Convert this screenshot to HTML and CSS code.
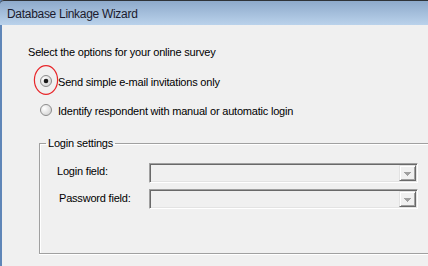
FILE: index.html
```html
<!DOCTYPE html>
<html lang="en">
<head>
    <meta charset="UTF-8">
    <meta name="viewport" content="width=device-width, initial-scale=1.0">
    <title>Database Linkage Wizard</title>
    <link rel="stylesheet" href="styles.css">
</head>
<body>
    <div class="window">
        <div class="titlebar">Database Linkage Wizard</div>

        <div class="content">
            <p class="prompt">Select the options for your online survey</p>

            <div class="option option-first">
                <svg class="radio" width="12" height="12" viewBox="0 0 12 12">
                    <defs>
                        <radialGradient id="radioFill" cx="0.35" cy="0.35" r="0.7">
                            <stop offset="0" stop-color="#ffffff"/>
                            <stop offset="1" stop-color="#d4d4d4"/>
                        </radialGradient>
                    </defs>
                    <circle cx="6" cy="6" r="5.5" fill="url(#radioFill)" stroke="#8c8c8c"/>
                    <circle cx="6" cy="6" r="2.3" fill="#1a1a1a"/>
                </svg>
                <span class="option-text">Send simple e-mail invitations only</span>
                <!-- red mark drawn over the selected radio -->
                <svg class="highlight" width="28" height="32" viewBox="0 0 28 32">
                    <ellipse cx="14" cy="16" rx="11.6" ry="14.4" fill="none" stroke="#e8262a" stroke-width="1.2"/>
                </svg>
            </div>

            <div class="option">
                <svg class="radio" width="12" height="12" viewBox="0 0 12 12">
                    <circle cx="6" cy="6" r="5.5" fill="url(#radioFill)" stroke="#8c8c8c"/>
                </svg>
                <span class="option-text">Identify respondent with manual or automatic login</span>
            </div>

            <fieldset class="group">
                <legend>Login settings</legend>

                <div class="field-row">
                    <label class="field-label">Login field:</label>
                    <div class="combo">
                        <span class="combo-btn">
                            <svg width="7" height="4" viewBox="0 0 7 4"><path d="M0 0H7V1H6V2H5V3H4V4H3V3H2V2H1V1H0Z" fill="#a0a0a0"/></svg>
                        </span>
                    </div>
                </div>

                <div class="field-row">
                    <label class="field-label field-label-password">Password field:</label>
                    <div class="combo">
                        <span class="combo-btn">
                            <svg width="7" height="4" viewBox="0 0 7 4"><path d="M0 0H7V1H6V2H5V3H4V4H3V3H2V2H1V1H0Z" fill="#a0a0a0"/></svg>
                        </span>
                    </div>
                </div>
            </fieldset>
        </div>
    </div>
</body>
</html>
```

FILE: styles.css
```css
html, body {
    margin: 0;
    padding: 0;
    height: 100%;
    overflow: hidden;
}

body {
    font-family: "Liberation Sans", Arial, sans-serif;
    font-size: 11px;
    color: #000;
    background-color: #f0f0f0;
}

.window {
    height: 100%;
    border-left: 2px solid #5f86b8;
    background-color: #f0f0f0;
}

.titlebar {
    height: 22px;
    margin-left: -2px;
    padding: 2px 0 0 7px;
    line-height: 22px;
    border-top: 1px solid #2f3338;
    border-top-left-radius: 4px;
    background: linear-gradient(#8eaacb, #bad2eb);
    font-size: 12px;
    letter-spacing: -0.3px;
    color: #1b1b2e;
}

.content {
    padding: 21px 0 0 26px;
}

.prompt {
    margin: 0;
    line-height: 13px;
    letter-spacing: -0.2px;
}

.option {
    position: relative;
    display: flex;
    align-items: flex-start;
    height: 14px;
    margin-top: 15px;
}

.option-first {
    margin-top: 16px;
}

.radio {
    flex: none;
    display: block;
    margin-left: 12px;
}

.option-text {
    margin: 1px 0 0 6px;
    line-height: 13px;
    letter-spacing: -0.2px;
}

/* red annotation ring */
.highlight {
    position: absolute;
    left: 4px;
    top: -11px;
}

/* the group box runs off the right edge in the screenshot */
.group {
    box-sizing: border-box;
    width: 389px;
    height: 118px;
    margin: 18px 0 0 11px;
    padding: 13px 0 0 6px;
    border: 1px solid #a0a0a0;
    border-right: none;
    box-shadow: 0 1px 0 #fff, inset 1px 1px 0 #fff;
}

.group legend {
    padding: 1px 2px 0;
    line-height: 13px;
    letter-spacing: -0.2px;
}

.field-row {
    display: grid;
    grid-template-columns: 92px 269px;
    margin-left: 11px;
}

.field-row + .field-row {
    margin-top: 6px;
}

.field-label {
    padding-top: 2px;
    line-height: 13px;
    letter-spacing: -0.2px;
}

.field-label-password {
    padding: 3px 0 0 2px;
}

.combo {
    box-sizing: border-box;
    height: 20px;
    display: flex;
    justify-content: flex-end;
    padding: 1px;
    border: 1px solid;
    border-color: #a0a0a0 #fff #fff #a0a0a0;
    box-shadow: inset 1px 1px 0 #696969, inset -1px -1px 0 #e3e3e3;
    background-color: #f0f0f0;
}

.combo-btn {
    box-sizing: border-box;
    width: 17px;
    height: 16px;
    display: flex;
    align-items: center;
    justify-content: center;
    padding-top: 1px;
    border: 1px solid;
    border-color: #e3e3e3 #696969 #696969 #e3e3e3;
    box-shadow: inset 1px 1px 0 #fff, inset -1px -1px 0 #a0a0a0;
    background-color: #f0f0f0;
}
```
